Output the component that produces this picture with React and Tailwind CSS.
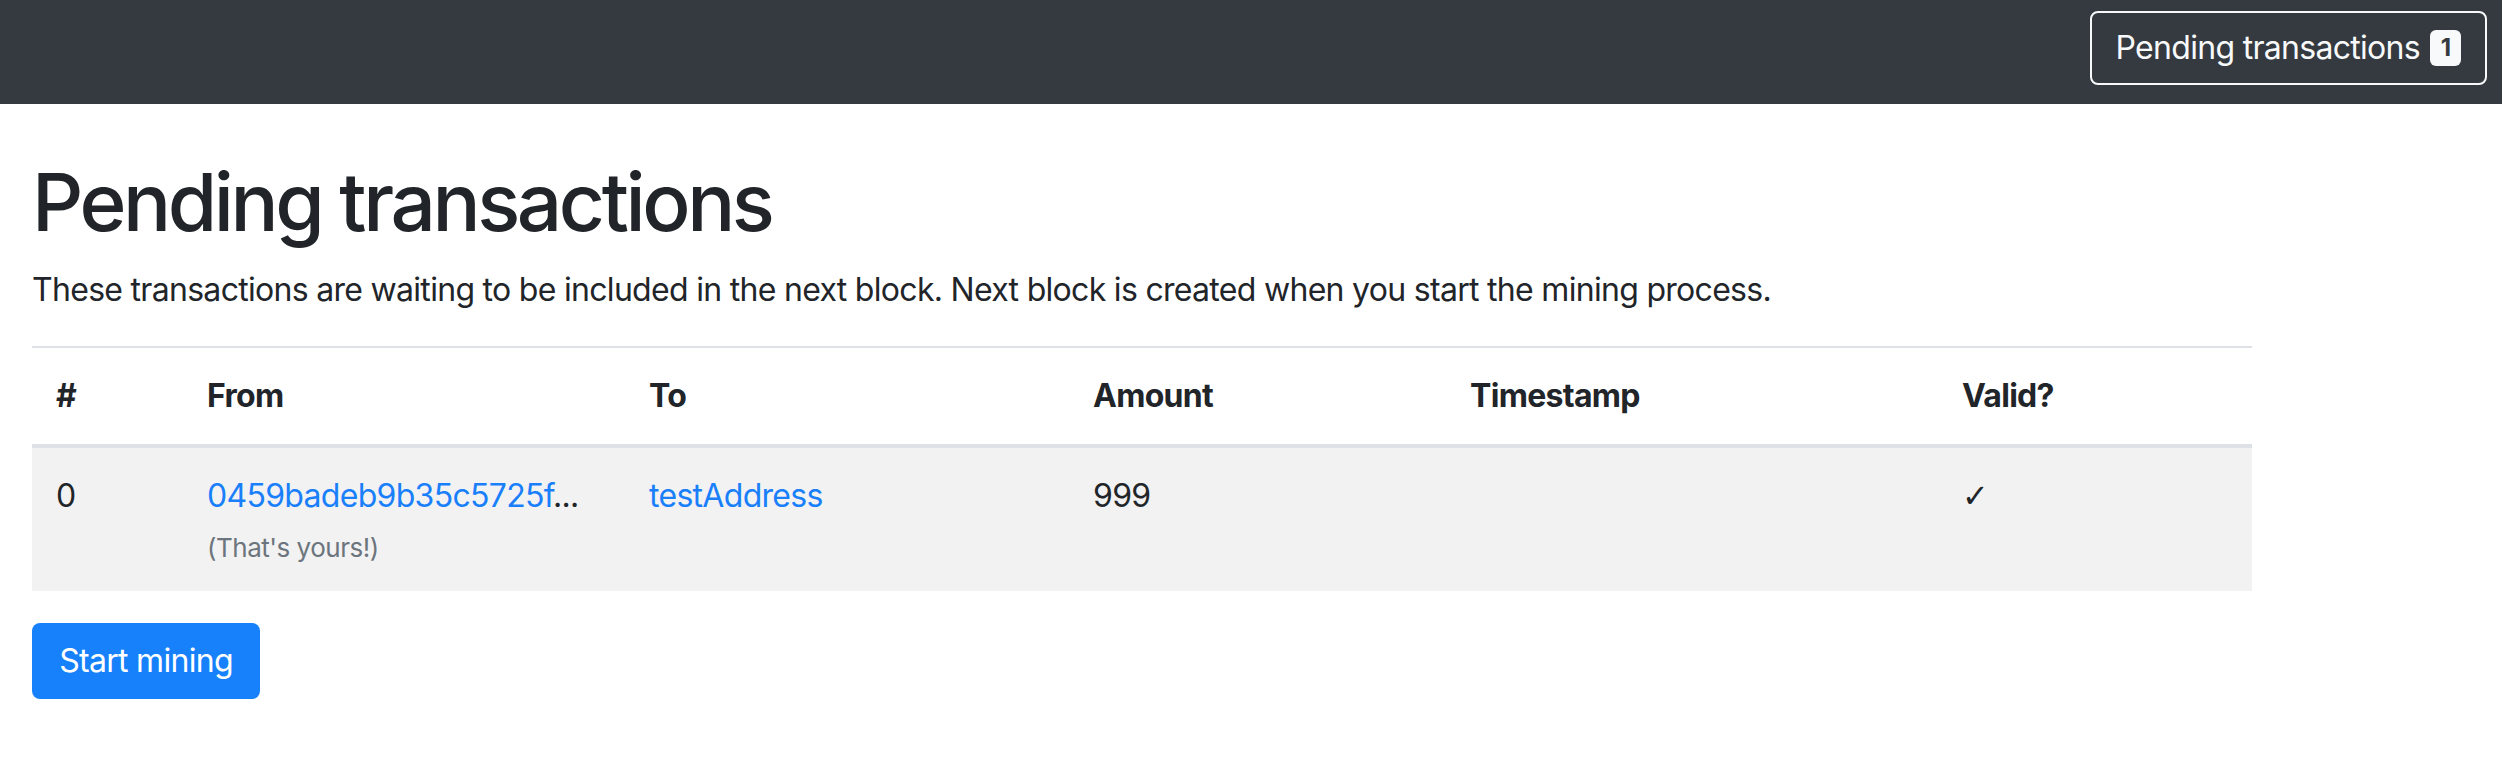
const transactions = [
  {
    id: 0,
    from: '0459badeb9b35c5725f',
    mine: true,
    to: 'testAddress',
    amount: 999,
    timestamp: '',
    valid: true,
  },
]

function Navbar({ pending }) {
  return (
    <nav className="h-[104px] bg-[#343a40] flex items-start justify-end pt-[11px] pr-[15px]">
      <button className="h-[74px] flex items-center gap-[10px] px-[24px] border-2 border-[#f8f9fa] rounded-[8px] text-[32px] leading-[48px] tracking-[-0.7px] text-[#f8f9fa]">
        Pending transactions
        <span className="h-[36px] min-w-[31px] px-[8px] flex items-center justify-center rounded-[6px] bg-[#f8f9fa] text-[#343a40] text-[24px] font-bold leading-none">
          {pending}
        </span>
      </button>
    </nav>
  )
}

export default function App() {
  return (
    <div className="min-h-screen bg-white text-[#212529] tracking-[-0.7px] font-['Inter','Noto_Sans',sans-serif]">
      <Navbar pending={transactions.length} />

      <main className="px-[32px] pt-[50px]">
        <h1 className="text-[80px] leading-[96px] font-medium mb-[16px] tracking-[-3.4px]">
          Pending transactions
        </h1>
        <p className="text-[32px] leading-[48px] mb-[32px]">
          These transactions are waiting to be included in the next block. Next block is created when you start the mining process.
        </p>

        <table className="w-[2220px] table-fixed border-collapse text-[32px] leading-[48px] text-left">
          <colgroup>
            <col className="w-[151px]" />
            <col className="w-[442px]" />
            <col className="w-[444px]" />
            <col className="w-[377px]" />
            <col className="w-[492px]" />
            <col className="w-[314px]" />
          </colgroup>
          <thead>
            <tr className="border-t-2 border-b-4 border-[#dee2e6]">
              <th className="p-[24px] font-bold">#</th>
              <th className="p-[24px] font-bold">From</th>
              <th className="p-[24px] font-bold">To</th>
              <th className="p-[24px] font-bold">Amount</th>
              <th className="p-[24px] font-bold">Timestamp</th>
              <th className="p-[24px] font-bold">Valid?</th>
            </tr>
          </thead>
          <tbody>
            {transactions.map((tx) => (
              <tr key={tx.id} className="bg-[#f2f2f2] align-top">
                <td className="p-[24px]">{tx.id}</td>
                <td className="p-[24px]">
                  <div className="whitespace-nowrap">
                    <a href="#" className="text-[#1a7ffb]">{tx.from}</a>...
                  </div>
                  {tx.mine && (
                    <div className="mt-[8px] text-[26px] leading-[39px] tracking-[-0.5px] text-[#6c757d]">(That's yours!)</div>
                  )}
                </td>
                <td className="p-[24px]">
                  <a href="#" className="text-[#1a7ffb]">{tx.to}</a>
                </td>
                <td className="p-[24px]">{tx.amount}</td>
                <td className="p-[24px]">{tx.timestamp}</td>
                <td className="p-[24px] font-['DejaVu_Sans',sans-serif]">{tx.valid ? '✓' : '✗'}</td>
              </tr>
            ))}
          </tbody>
        </table>

        <button className="mt-[32px] h-[76px] w-[228px] flex items-center justify-center rounded-[8px] bg-[#1781fb] text-white text-[32px] leading-[48px]">
          Start mining
        </button>
      </main>
    </div>
  )
}
